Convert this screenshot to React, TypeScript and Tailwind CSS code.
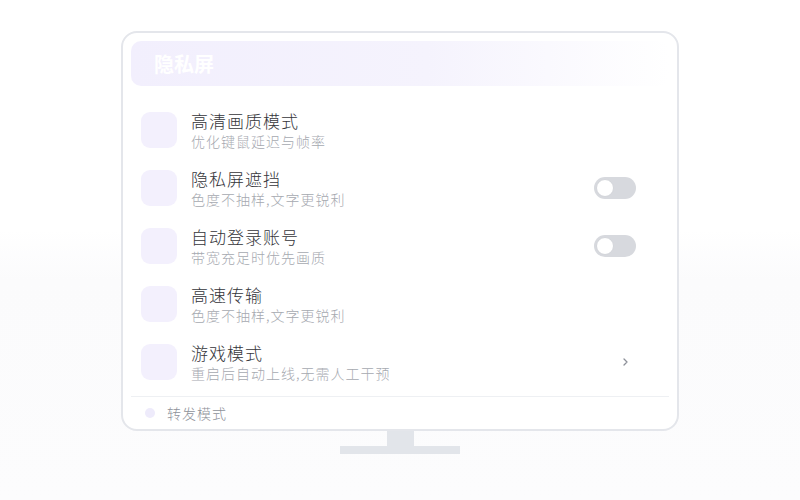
import React from "react";

const rows = [
  { title: "高清画质模式", sub: "优化键鼠延迟与帧率", action: "none" },
  { title: "隐私屏遮挡", sub: "色度不抽样,文字更锐利", action: "toggle" },
  { title: "自动登录账号", sub: "带宽充足时优先画质", action: "toggle" },
  { title: "高速传输", sub: "色度不抽样,文字更锐利", action: "none" },
  { title: "游戏模式", sub: "重启后自动上线,无需人工干预", action: "chevron" },
];

function Toggle() {
  return (
    <div className="flex h-[22px] w-[42px] items-center rounded-full bg-[#d7d9de] p-[2px]">
      <div className="h-[18px] w-[18px] rounded-full border border-[#d3d5da] bg-white" />
    </div>
  );
}

export default function App() {
  return (
    <div
      className="flex h-[500px] w-[800px] flex-col items-center bg-[linear-gradient(to_bottom,#ffffff_0%,#ffffff_46%,#fbfbfc_56%,#fcfcfd_100%)] pt-[31px]"
      style={{ fontFamily: '"Noto Sans CJK SC", "Noto Sans", sans-serif' }}
    >
      {/* Screen */}
      <div className="flex w-[558px] flex-col rounded-[16px] border-2 border-[#e4e6eb] bg-white px-[8px] pt-[8px]">
        <div className="flex h-[45px] items-center rounded-[10px] bg-[linear-gradient(to_right,#f2effd_0%,#f5f3fd_55%,#ffffff_100%)] pl-[23px]">
          <span className="text-[20px] font-bold text-white">隐私屏</span>
        </div>

        <div className="mt-[15px] flex flex-col">
          {rows.map((r) => (
            <div key={r.title} className="flex h-[58px] items-center pl-[10px] pr-[33px]">
              <div className="h-[36px] w-[36px] rounded-[9px] bg-[#f3f0fd]" />
              <div className="ml-[14px] flex flex-1 flex-col">
                <span className="text-[17px] font-light leading-[21px] tracking-[1px] text-[#34353a]">{r.title}</span>
                <span className="mt-[1px] text-[14px] font-light leading-[18px] tracking-[1px] text-[#a6a9b0]">{r.sub}</span>
              </div>
              {r.action === "toggle" && <Toggle />}
              {r.action === "chevron" && (
                <svg width="16" height="16" viewBox="0 0 16 16" className="mr-[3px]">
                  <path d="M7 5l3 3-3 3" fill="none" stroke="#8d9099" strokeWidth="1.3" strokeLinecap="round" strokeLinejoin="round" />
                </svg>
              )}
            </div>
          ))}
        </div>

        <div className="mt-[5px] h-px bg-[#eef0f3]" />
        <div className="flex h-[32px] items-center pl-[14px]">
          <div className="h-[10px] w-[10px] rounded-full bg-[#eeebfb]" />
          <span className="ml-[12px] text-[14px] font-light tracking-[1px] text-[#8e9199]">转发模式</span>
        </div>
      </div>

      {/* Stand */}
      <div className="h-[15px] w-[27px] bg-[#e2e5ea]" />
      <div className="h-[8px] w-[120px] bg-[#e2e5ea]" />
    </div>
  );
}
